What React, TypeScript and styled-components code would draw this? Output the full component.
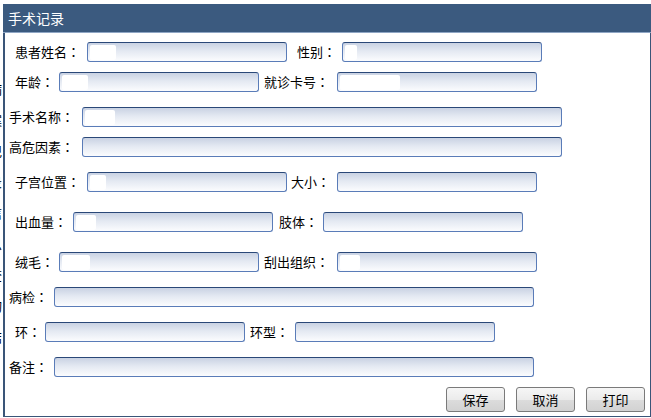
import React from "react";
import styled, { createGlobalStyle } from "styled-components";

const Global = createGlobalStyle`
  html, body { margin: 0; padding: 0; background: #ffffff; }
  body {
    font-family: "Noto Sans CJK SC", "Microsoft YaHei", "DejaVu Sans", sans-serif;
    font-size: 13px;
    color: #000;
    width: 651px;
    height: 418px;
    overflow: hidden;
    position: relative;
  }
`;

const Backdrop = styled.div`
  display: flex;
  flex-direction: column;
  gap: 17px;
  padding-top: 82px;
  margin-left: -11px;
  font-size: 13px;
  line-height: 14px;
  color: #000;
`;

const Dialog = styled.div`
  position: absolute;
  left: 3px;
  top: 4px;
  width: 648px;
  height: 413px;
  box-sizing: border-box;
  background: #ffffff;
  border: 1px solid #3a5578;
  border-left-width: 2px;
  border-top: none;
  display: flex;
  flex-direction: column;
`;

const Header = styled.div`
  height: 28px;
  background: #3b5a7f;
  border-bottom: 1px solid #8fa6c4;
  color: #ffffff;
  font-size: 14px;
  display: flex;
  align-items: center;
  margin-left: -2px;
  margin-right: -1px;
  padding-left: 5px;
`;

const Body = styled.div`
  display: flex;
  flex-direction: column;
  padding-top: 9px;
`;

const Row = styled.div<{ $mt: number }>`
  display: flex;
  align-items: center;
  height: 20px;
  margin-top: ${(p) => p.$mt}px;
`;

const Label = styled.span<{ $lead: number; $gap: number }>`
  margin-left: ${(p) => p.$lead}px;
  margin-right: ${(p) => p.$gap}px;
  white-space: nowrap;
  line-height: 20px;
`;

const Colon = styled.span`
  font-family: "Noto Sans CJK JP", "Noto Sans CJK SC", sans-serif;
`;

const Field = styled.div<{ $w: number }>`
  width: ${(p) => p.$w}px;
  height: 20px;
  box-sizing: border-box;
  border: 1px solid #5a7cb8;
  border-top-color: #2a4878;
  border-radius: 3px;
  background: linear-gradient(to bottom, #c9d2e3 0%, #e4e9f2 45%, #fbfcfe 100%);
  display: flex;
  align-items: center;
  padding-left: 2px;
`;

const Blot = styled.span<{ $w: number }>`
  width: ${(p) => p.$w}px;
  height: 15px;
  background: #ffffff;
  border-radius: 2px;
`;

const Buttons = styled.div`
  display: flex;
  justify-content: flex-end;
  gap: 11px;
  margin-top: 10px;
  padding-right: 5px;
`;

const Button = styled.button`
  width: 59px;
  height: 25px;
  box-sizing: border-box;
  border: 1px solid #7a7a7a;
  border-radius: 3px;
  background: linear-gradient(to bottom, #f6f6f6 0%, #ebebeb 50%, #dcdcdc 51%, #d2d2d2 100%);
  font-family: "Noto Sans CJK SC", sans-serif;
  font-size: 13px;
  color: #000;
  padding: 0;
  display: flex;
  align-items: center;
  justify-content: center;
`;

type F = { label: string; lead: number; gap: number; w: number; blot?: number };
type R = { mt: number; fields: F[] };

const rows: R[] = [
  { mt: 0, fields: [
    { label: "患者姓名", lead: 10, gap: 7, w: 200, blot: 26 },
    { label: "性别", lead: 10, gap: 6, w: 200, blot: 12 },
  ] },
  { mt: 10, fields: [
    { label: "年龄", lead: 10, gap: 5, w: 200, blot: 26 },
    { label: "就诊卡号", lead: 5, gap: 8, w: 200, blot: 60 },
  ] },
  { mt: 15, fields: [{ label: "手术名称", lead: 4, gap: 8, w: 480, blot: 30 }] },
  { mt: 10, fields: [{ label: "高危因素", lead: 4, gap: 8, w: 480 }] },
  { mt: 15, fields: [
    { label: "子宫位置", lead: 10, gap: 7, w: 200, blot: 16 },
    { label: "大小", lead: 4, gap: 7, w: 200 },
  ] },
  { mt: 20, fields: [
    { label: "出血量", lead: 10, gap: 6, w: 200, blot: 20 },
    { label: "肢体", lead: 6, gap: 5, w: 200 },
  ] },
  { mt: 20, fields: [
    { label: "绒毛", lead: 10, gap: 5, w: 200, blot: 28 },
    { label: "刮出组织", lead: 5, gap: 8, w: 200, blot: 20 },
  ] },
  { mt: 15, fields: [{ label: "病检", lead: 4, gap: 6, w: 480 }] },
  { mt: 15, fields: [
    { label: "环", lead: 10, gap: 4, w: 200 },
    { label: "环型", lead: 5, gap: 6, w: 200 },
  ] },
  { mt: 15, fields: [{ label: "备注", lead: 4, gap: 6, w: 480 }] },
];

export default function App() {
  return (
    <>
      <Global />
      <Backdrop>
        <span>病</span>
        <span>案</span>
        <span>记</span>
        <span>录</span>
        <span>信</span>
        <span>息</span>
        <span>查</span>
        <span>询</span>
        <span>结</span>
      </Backdrop>
      <Dialog>
        <Header>手术记录</Header>
        <Body>
          {rows.map((r, i) => (
            <Row key={i} $mt={r.mt}>
              {r.fields.map((f) => (
                <React.Fragment key={f.label}>
                  <Label $lead={f.lead} $gap={f.gap}>
                    {f.label}
                    <Colon>：</Colon>
                  </Label>
                  <Field $w={f.w}>{f.blot ? <Blot $w={f.blot} /> : null}</Field>
                </React.Fragment>
              ))}
            </Row>
          ))}
          <Buttons>
            <Button>保存</Button>
            <Button>取消</Button>
            <Button>打印</Button>
          </Buttons>
        </Body>
      </Dialog>
    </>
  );
}
